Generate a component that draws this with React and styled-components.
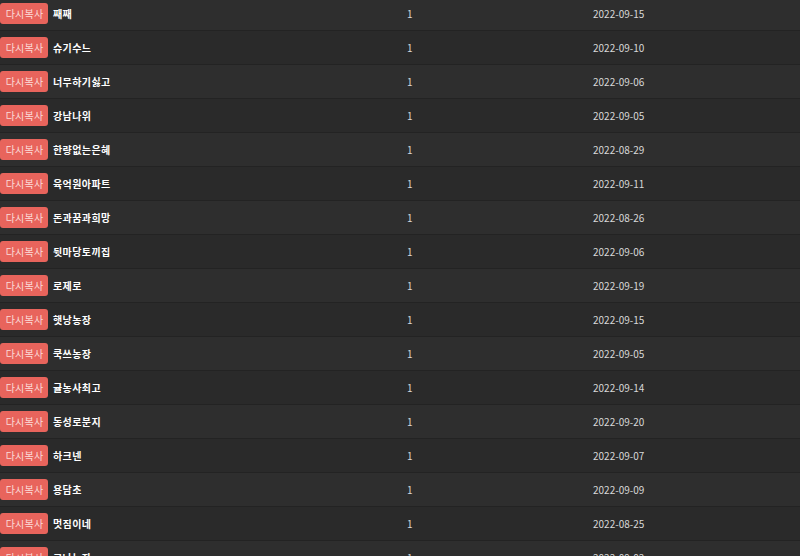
import React from "react";
import styled, { createGlobalStyle } from "styled-components";

const GlobalStyle = createGlobalStyle`
  body {
    margin: 0;
    background: #2a2a2a;
    font-family: "Noto Sans CJK KR", "Noto Sans", sans-serif;
    overflow: hidden;
  }
`;

const rows = [
  ["째째", "2022-09-15"],
  ["슈기수느", "2022-09-10"],
  ["너무하기싫고", "2022-09-06"],
  ["강남나위", "2022-09-05"],
  ["한량없는은혜", "2022-08-29"],
  ["육억원아파트", "2022-09-11"],
  ["돈과꿈과희망", "2022-08-26"],
  ["뒷마당토끼집", "2022-09-06"],
  ["로제로", "2022-09-19"],
  ["햇낭농장", "2022-09-15"],
  ["쿡쓰농장", "2022-09-05"],
  ["귤농사최고", "2022-09-14"],
  ["동성로분지", "2022-09-20"],
  ["하크넨", "2022-09-07"],
  ["용담초", "2022-09-09"],
  ["멋짐이네", "2022-08-25"],
  ["크나농장", "2022-09-02"],
];

export default function App() {
  return (
    <>
      <GlobalStyle />
      <List>
        {rows.map(([name, date], i) => (
          <Row key={i} $odd={i % 2 === 0}>
            <CopyButton>다시복사</CopyButton>
            <Name>{name}</Name>
            <Count>1</Count>
            <DateCell>{date}</DateCell>
          </Row>
        ))}
      </List>
    </>
  );
}

const List = styled.div`
  margin-top: -3px;
`;

const Row = styled.div`
  display: grid;
  grid-template-columns: 53px 354px 186px 1fr;
  align-items: center;
  height: 33px;
  border-bottom: 1px solid #232323;
  background: ${(p) => (p.$odd ? "#2e2e2e" : "#2a2a2a")};
`;

const CopyButton = styled.button`
  width: 48px;
  height: 21px;
  padding: 0 0 0 1px;
  border: none;
  border-radius: 3px;
  background: #e8645c;
  color: #fbdcd9;
  font-family: inherit;
  font-size: 10px;
  letter-spacing: 0.2px;
  line-height: 21px;
  cursor: pointer;
`;

const Name = styled.span`
  color: #fff;
  font-size: 10px;
  font-weight: 700;
  letter-spacing: 0.4px;
`;

const Count = styled.span`
  color: #d8d8d8;
  font-size: 10px;
`;

const DateCell = styled.span`
  color: #d8d8d8;
  font-size: 10px;
`;
